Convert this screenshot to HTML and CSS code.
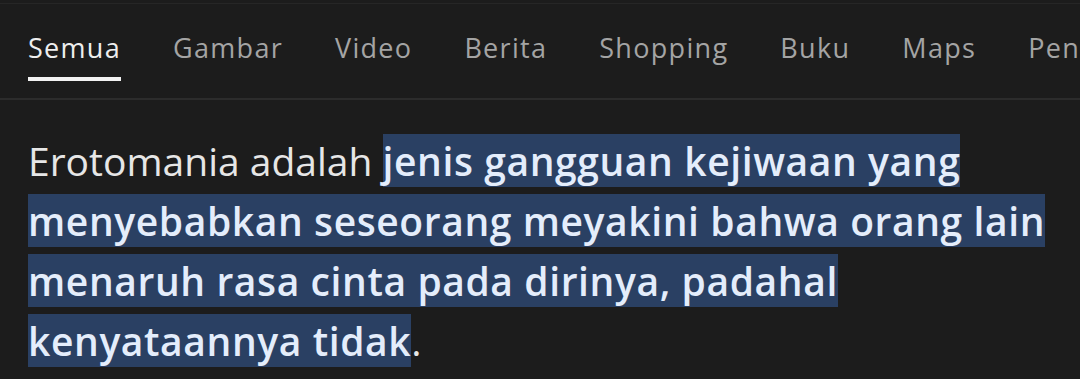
FILE: index.html
```html
<!DOCTYPE html>
<html lang="id">
<head>
    <meta charset="UTF-8">
    <meta name="viewport" content="width=device-width, initial-scale=1.0">
    <title>Erotomania - Penelusuran</title>
    <link rel="stylesheet" href="styles.css">
</head>
<body>
    <header class="top-bar">
        <nav class="tabs">
            <a href="#" class="tab active">Semua</a>
            <a href="#" class="tab">Gambar</a>
            <a href="#" class="tab">Video</a>
            <a href="#" class="tab">Berita</a>
            <a href="#" class="tab">Shopping</a>
            <a href="#" class="tab">Buku</a>
            <a href="#" class="tab">Maps</a>
            <a href="#" class="tab">Penerbangan</a>
        </nav>
    </header>

    <main class="result">
        <p class="answer">Erotomania adalah <mark class="hl">jenis gangguan kejiwaan yang<br>menyebabkan seseorang meyakini bahwa orang lain<br>menaruh rasa cinta pada dirinya, padahal<br>kenyataannya tidak</mark>.</p>
    </main>
</body>
</html>
```

FILE: styles.css
```css
:root {
    --bg: #1c1c1c;
    --line: #2c2c2c;
    --tab-active: #eeeeee;
    --tab-muted: #a4a4a4;
    --text: #e6e6e6;
    --hl-bg: #2a4063;
    --hl-text: #e4edfb;
}

* {
    margin: 0;
    padding: 0;
    box-sizing: border-box;
    font-family: 'Open Sans', 'Noto Sans', sans-serif;
}

html,
body {
    background: var(--bg);
    height: 100%;
    overflow: hidden;
}

.top-bar {
    border-top: 1px solid #262626;
    margin-top: 3px;
    border-bottom: 2px solid var(--line);
    height: 97px;
    overflow: hidden;
}

.tabs {
    display: flex;
    gap: 52px;
    padding: 26px 0 0 28px;
    white-space: nowrap;
}

.tab {
    color: var(--tab-muted);
    text-decoration: none;
    font-size: 27px;
    font-weight: 500;
    letter-spacing: 1.3px;
    line-height: 36px;
    padding-bottom: 11px;
    border-bottom: 4px solid transparent;
}

.tab.active {
    color: var(--tab-active);
    border-bottom-color: #f2f2f2;
}

.result {
    padding: 31px 0 0 28px;
}

.answer {
    color: var(--text);
    font-size: 39px;
    line-height: 60px;
    white-space: nowrap;
}

.hl {
    background: var(--hl-bg);
    color: var(--hl-text);
    font-weight: 600;
    letter-spacing: 0.6px;
}
```
